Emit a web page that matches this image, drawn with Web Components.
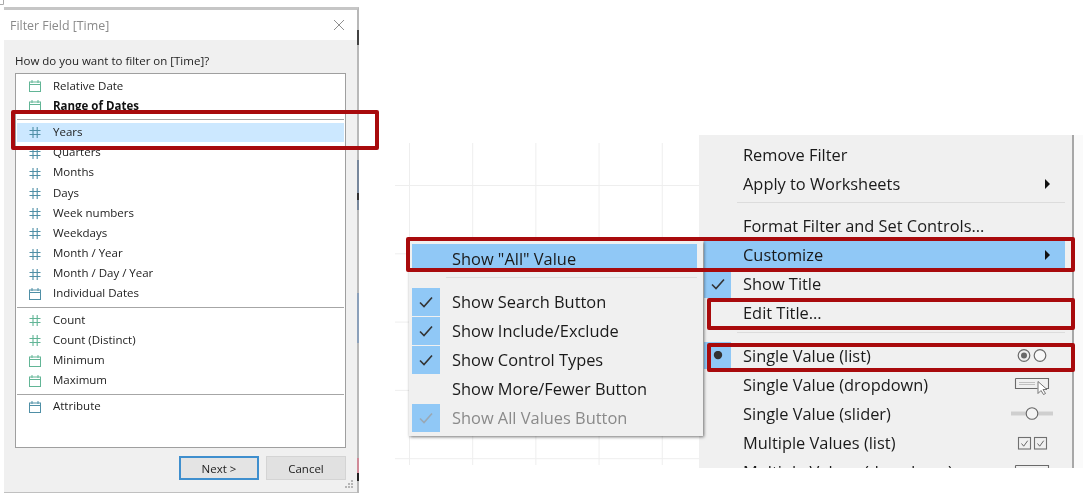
<!DOCTYPE html>
<html>
<head>
<meta charset="utf-8">
<title>Filter Field</title>
<style>
  html, body { margin: 0; padding: 0; background: #fff; }
  body { width: 1092px; height: 500px; overflow: hidden; position: relative; font-family: "Open Sans", "Liberation Sans", sans-serif; filter: blur(0.3px); }
</style>
</head>
<body>
<grid-canvas style="left:395px;top:143px;width:304px;height:322px"></grid-canvas>

<filter-dialog style="left:4px;top:7px" heading="Filter Field [Time]" question="How do you want to filter on [Time]?">
  <field-group>
    <field-row icon="cal" tone="green">Relative Date</field-row>
    <field-row icon="cal" tone="green" strong>Range of Dates</field-row>
  </field-group>
  <field-group>
    <field-row icon="hash" tone="blue" selected>Years</field-row>
    <field-row icon="hash" tone="blue">Quarters</field-row>
    <field-row icon="hash" tone="blue">Months</field-row>
    <field-row icon="hash" tone="blue">Days</field-row>
    <field-row icon="hash" tone="blue">Week numbers</field-row>
    <field-row icon="hash" tone="blue">Weekdays</field-row>
    <field-row icon="hash" tone="blue">Month / Year</field-row>
    <field-row icon="hash" tone="blue">Month / Day / Year</field-row>
    <field-row icon="cal" tone="blue">Individual Dates</field-row>
  </field-group>
  <field-group>
    <field-row icon="hash" tone="green">Count</field-row>
    <field-row icon="hash" tone="green">Count (Distinct)</field-row>
    <field-row icon="cal" tone="green">Minimum</field-row>
    <field-row icon="cal" tone="green">Maximum</field-row>
  </field-group>
  <field-group last>
    <field-row icon="cal" tone="blue">Attribute</field-row>
  </field-group>
</filter-dialog>

<context-menu class="main" style="left:699px;top:135px;width:375px;height:333px;--pad:5px 7px 0 5px;--icon:27px;--gap:12px;--sep-left:33px">
  <menu-row>Remove Filter</menu-row>
  <menu-row trail="arrow">Apply to Worksheets</menu-row>
  <menu-sep></menu-sep>
  <menu-row>Format Filter and Set Controls...</menu-row>
  <menu-row trail="arrow" active>Customize</menu-row>
  <menu-row mark="check">Show Title</menu-row>
  <menu-row>Edit Title...</menu-row>
  <menu-sep></menu-sep>
  <menu-row mark="dot" trail="radio">Single Value (list)</menu-row>
  <menu-row trail="dropdown">Single Value (dropdown)</menu-row>
  <menu-row trail="slider">Single Value (slider)</menu-row>
  <menu-row trail="checks">Multiple Values (list)</menu-row>
  <menu-row trail="dropdown">Multiple Values (dropdown)</menu-row>
</context-menu>

<context-menu class="sub" style="left:409px;top:241px;width:294px;height:195px;--pad:3px 6px 0 3px;--icon:28px;--gap:12px;--sep-left:34px">
  <menu-row active short>Show "All" Value</menu-row>
  <menu-sep class="wide"></menu-sep>
  <menu-row mark="check">Show Search Button</menu-row>
  <menu-row mark="check">Show Include/Exclude</menu-row>
  <menu-row mark="check">Show Control Types</menu-row>
  <menu-row>Show More/Fewer Button</menu-row>
  <menu-row mark="check" disabled>Show All Values Button</menu-row>
</context-menu>

<red-box style="left:11px;top:110px;width:368px;height:40px"></red-box>
<red-box style="left:406px;top:237px;width:669px;height:35px"></red-box>
<red-box style="left:707px;top:298px;width:368px;height:32px"></red-box>
<red-box style="left:707px;top:343px;width:368px;height:29px"></red-box>

<script>
const ICONS = {
  cal: `<rect x="1.5" y="3" width="11" height="9.5" fill="none" stroke="currentColor"/><path d="M1.5 5.5h11M4 1v3M10 1v3" fill="none" stroke="currentColor"/>`,
  hash: `<path d="M5 2v11M9.2 2v11M1.5 5.5h11M1.5 9.5h11" fill="none" stroke="currentColor" stroke-width="1.1"/>`
};

class GridCanvas extends HTMLElement {
  constructor() {
    super();
    this.attachShadow({mode: 'open'});
    this.shadowRoot.innerHTML = `
      <style>
        :host {
          display: block;
          position: absolute;
          background-color: #fff;
          background-image:
            linear-gradient(to right, #eeeeee 1px, transparent 1px),
            linear-gradient(to bottom, #eeeeee 1px, transparent 1px);
          background-size: 63.2px 68.3px;
          background-position: 14px 42px;
        }
      </style>`;
  }
}

class FilterDialog extends HTMLElement {
  constructor() {
    super();
    this.attachShadow({mode: 'open'});
  }
  connectedCallback() {
    this.shadowRoot.innerHTML = `
      <style>
        :host {
          display: flex;
          flex-direction: column;
          position: absolute;
          box-sizing: border-box;
          width: 355px;
          height: 486px;
          background: #f0f0f0;
          border-top: 3px solid #c6c6c6;
          border-right: 2px solid #b8b8b8;
          border-bottom: 1px solid #c0c0c0;
          color: #222;
          font: 11.5px "Open Sans", "Liberation Sans", sans-serif;
        }
        .title {
          height: 30px;
          flex: none;
          background: #fff;
          display: flex;
          align-items: center;
          justify-content: space-between;
          padding: 0 12px 0 6px;
          color: #8a8a8a;
          font-size: 12.4px;
        }
        .question { padding: 12px 0 0 11px; height: 21px; line-height: 17px; }
        .list {
          box-sizing: border-box;
          margin-left: 11px;
          width: 331px;
          height: 375px;
          flex: none;
          background: #fff;
          border: 1px solid #9f9f9f;
          padding: 2px 1px 0;
        }
        .foot {
          display: flex;
          justify-content: flex-end;
          gap: 7px;
          padding: 8px 11px 0 0;
        }
        .btn {
          box-sizing: border-box;
          width: 80px;
          height: 24px;
          background: #e1e1e1;
          display: flex;
          align-items: center;
          justify-content: center;
          border: 1px solid #d4d4d4;
        }
        .btn.primary { border: 2px solid #3f8fce; background: #e4e4e4; }
        .grip { position: absolute; right: 3px; bottom: 3px; }
        /* window behind the dialog shows through along its right edge */
        .edge {
          position: absolute;
          right: -2px;
          top: 0;
          bottom: -1px;
          width: 2px;
          background: linear-gradient(to bottom,
            #b8b8b8 0 20px, #444 20px 35px, #b8b8b8 35px 150px,
            #77879c 150px 183px, #333 183px 190px, #77879c 190px 200px, #b8b8b8 200px 283px,
            #8ba0ba 283px 333px, #b8b8b8 333px 448px, #d08a98 448px 463px, #222 463px 471px, #b8b8b8 471px);
        }
        .corner { position: absolute; left: -4px; top: -10px; }
      </style>
      <svg class="corner" width="4" height="5" viewBox="0 0 4 5"><path d="M3.5 0v4.5H0" fill="none" stroke="#aaa"/></svg>
      <div class="title">
        <span>${this.getAttribute('heading')}</span>
        <svg width="12" height="12" viewBox="0 0 12 12"><path d="M1 1l10 10M11 1L1 11" stroke="#8f8f8f" fill="none"/></svg>
      </div>
      <div class="question">${this.getAttribute('question')}</div>
      <div class="list"><slot></slot></div>
      <div class="foot">
        <div class="btn primary">Next &gt;</div>
        <div class="btn">Cancel</div>
      </div>
      <div class="edge"></div>
      <svg class="grip" width="9" height="9" viewBox="0 0 9 9" fill="#b5b5b5">
        <rect x="6" y="0" width="2" height="2"/><rect x="3" y="3" width="2" height="2"/><rect x="6" y="3" width="2" height="2"/>
        <rect x="0" y="6" width="2" height="2"/><rect x="3" y="6" width="2" height="2"/><rect x="6" y="6" width="2" height="2"/>
      </svg>`;
  }
}

class FieldGroup extends HTMLElement {
  constructor() {
    super();
    this.attachShadow({mode: 'open'});
    this.shadowRoot.innerHTML = `
      <style>
        :host { display: block; padding-bottom: 3px; margin-bottom: 2px; border-bottom: 1px solid #a6a6a6; }
        :host([last]) { border-bottom: 0; }
      </style>
      <slot></slot>`;
  }
}

class FieldRow extends HTMLElement {
  constructor() {
    super();
    this.attachShadow({mode: 'open'});
  }
  connectedCallback() {
    const tone = this.getAttribute('tone') === 'blue' ? '#4f8fa6' : '#62b596';
    this.shadowRoot.innerHTML = `
      <style>
        :host {
          display: flex;
          align-items: center;
          height: 20.2px;
          position: relative;
        }
        :host([strong]) { font-weight: bold; color: #111; }
        :host([selected])::before {
          content: "";
          position: absolute;
          left: 0; right: 0; top: 1px; bottom: 1px;
          background: #cce8ff;
        }
        svg { margin-left: 11px; flex: none; position: relative; color: ${tone}; }
        span { margin-left: 11px; position: relative; top: -1px; }
      </style>
      <svg width="14" height="14" viewBox="0 0 14 14">${ICONS[this.getAttribute('icon')]}</svg>
      <span><slot></slot></span>`;
  }
}

class ContextMenu extends HTMLElement {
  constructor() {
    super();
    this.attachShadow({mode: 'open'});
    this.shadowRoot.innerHTML = `
      <style>
        :host {
          display: block;
          position: absolute;
          box-sizing: border-box;
          overflow: hidden;
          background: #f0f0f0;
          padding: var(--pad);
          color: #1a1a1a;
          font: 16.4px "Open Sans", "Liberation Sans", sans-serif;
        }
        :host(.sub) { overflow: visible; box-shadow: 1px 1px 3px rgba(0,0,0,.55); }
        :host(.main) { border-right: 2px solid #a8a8a8; box-shadow: 9px 0 0 #fafafa; }
      </style>
      <slot></slot>`;
  }
}

class MenuSep extends HTMLElement {
  constructor() {
    super();
    this.attachShadow({mode: 'open'});
    this.shadowRoot.innerHTML = `
      <style>
        :host { display: block; height: 1px; background: #dcdcdc; margin: 4px 0 8.5px var(--sep-left); }
        :host(.wide) { margin: 6px 0 9.5px var(--sep-left); }
      </style>`;
  }
}

const TRAILS = {
  arrow: `<path d="M48 7l5 5-5 5z" fill="#111"/>`,
  radio: `<circle cx="27" cy="11.5" r="5.8" fill="none" stroke="#6a6a6a" stroke-width="1.2"/><circle cx="27" cy="11.5" r="3" fill="#6a6a6a"/><circle cx="43" cy="11.5" r="5.8" fill="#f8f8f8" stroke="#6a6a6a" stroke-width="1.2"/>`,
  dropdown: `<path d="M18.5 5.5h33v10h-8M18.5 5.5v10h22" fill="none" stroke="#6a6a6a" stroke-width="1.1"/><path d="M22 9.5h16M22 11.5h16" stroke="#c0c0c0"/><path d="M41 8.5v12l3-3 2.5 4 2-1-2.5-4h4z" fill="#fff" stroke="#666" stroke-width=".9"/>`,
  slider: `<rect x="14" y="9.5" width="42" height="4" fill="#cfcfcf"/><circle cx="35" cy="11.5" r="5.8" fill="#f4f4f4" stroke="#666" stroke-width="1.1"/>`,
  checks: `<rect x="21.5" y="6.5" width="12" height="11.5" fill="none" stroke="#707070" stroke-width="1.1"/><path d="M24.5 12.5l2.2 2.7 4-5.5" fill="none" stroke="#666"/><rect x="37.5" y="6.5" width="12" height="11.5" fill="none" stroke="#707070" stroke-width="1.1"/><path d="M40.5 12.5l2.2 2.7 4-5.5" fill="none" stroke="#666"/>`
};

class MenuRow extends HTMLElement {
  constructor() {
    super();
    this.attachShadow({mode: 'open'});
  }
  connectedCallback() {
    const mark = this.getAttribute('mark');
    const trail = this.getAttribute('trail');
    let markHtml = '';
    if (mark === 'check') {
      markHtml = `<svg width="16" height="14" viewBox="0 0 16 14"><path d="M2 7.5l4 4 8-9" fill="none" stroke="currentColor" stroke-width="1.6"/></svg>`;
    } else if (mark === 'dot') {
      markHtml = `<svg width="10" height="10" viewBox="0 0 10 10"><circle cx="5" cy="4" r="4.2" fill="#333"/></svg>`;
    }
    this.shadowRoot.innerHTML = `
      <style>
        :host {
          display: grid;
          grid-template-columns: var(--icon) 1fr 68px;
          align-items: center;
          height: 29px;
        }
        :host([short]) { height: 27px; }
        :host([active]) { background: #90c8f6; }
        :host([disabled]) { color: #8a8a8a; }
        .mark {
          height: 27.5px;
          display: flex;
          align-items: center;
          justify-content: center;
          background: ${mark ? '#90c8f6' : 'transparent'};
          color: #333;
        }
        :host([disabled]) .mark { color: #9aa8b4; }
        .label { margin-left: var(--gap); white-space: nowrap; position: relative; top: -0.5px; }
        :host([short]) .label { top: 1px; }
        svg.trail { display: block; }
      </style>
      <div class="mark">${markHtml}</div>
      <div class="label"><slot></slot></div>
      ${trail ? `<svg class="trail" width="68" height="24" viewBox="0 0 68 24">${TRAILS[trail]}</svg>` : '<div></div>'}`;
  }
}

class RedBox extends HTMLElement {
  constructor() {
    super();
    this.attachShadow({mode: 'open'});
    this.shadowRoot.innerHTML = `
      <style>
        :host {
          display: block;
          position: absolute;
          box-sizing: border-box;
          border: 4px solid #a80a0c;
          border-radius: 2px;
        }
      </style>`;
  }
}

customElements.define('grid-canvas', GridCanvas);
customElements.define('filter-dialog', FilterDialog);
customElements.define('field-group', FieldGroup);
customElements.define('field-row', FieldRow);
customElements.define('context-menu', ContextMenu);
customElements.define('menu-sep', MenuSep);
customElements.define('menu-row', MenuRow);
customElements.define('red-box', RedBox);
</script>
</body>
</html>
